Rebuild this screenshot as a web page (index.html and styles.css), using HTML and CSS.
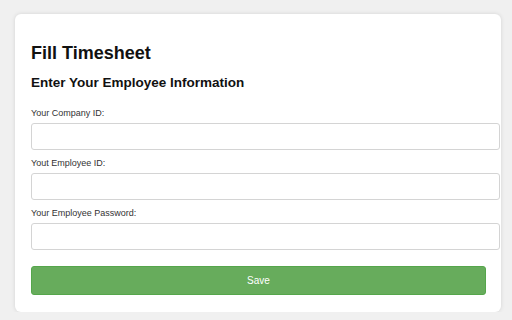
FILE: index.html
```html
<!DOCTYPE html>
<html>
<head>
<meta charset="utf-8">
<link rel="stylesheet" href="styles.css">
</head>
<body>
<div class="card">
  <h1 class="title">Fill Timesheet</h1>
  <h2 class="subtitle">Enter Your Employee Information</h2>
  <div class="field">
    <label class="label">Your Company ID:</label>
    <input class="input" type="text">
  </div>
  <div class="field">
    <label class="label">Yout Employee ID:</label>
    <input class="input" type="text">
  </div>
  <div class="field">
    <label class="label">Your Employee Password:</label>
    <input class="input" type="password">
  </div>
  <button class="save">Save</button>
</div>
</body>
</html>
```
FILE: styles.css
```css
html, body {
  margin: 0;
  padding: 0;
  background: #f0f0f0;
  font-family: "Liberation Sans", Arial, sans-serif;
}
body {
  padding: 14px 0 0 15px;
}
.card {
  box-sizing: border-box;
  width: 486px;
  height: 298px;
  background: #fff;
  border-radius: 6px;
  box-shadow: 0 0 4px rgba(0, 0, 0, 0.12);
  padding: 16px 15px 17px 16px;
}
.title {
  margin: 13px 0 0 0;
  font-size: 18px;
  line-height: 21px;
  font-weight: bold;
  color: #111;
}
.subtitle {
  margin: 11px 0 0 0;
  font-size: 13.5px;
  line-height: 16px;
  font-weight: bold;
  color: #111;
}
.field {
  display: flex;
  flex-direction: column;
  margin-top: 8px;
}
.subtitle + .field {
  margin-top: 17px;
}
.label {
  font-size: 9px;
  line-height: 11px;
  color: #333;
  margin-bottom: 4px;
}
.input {
  width: 100%;
  height: 27px;
  box-sizing: content-box;
  padding: 0 6px;
  height: 25px;
  border: 1px solid #d4d4d4;
  border-radius: 3px;
  margin: 0;
  background: #fff;
  font-family: inherit;
}
.save {
  display: block;
  width: 100%;
  height: 29px;
  margin-top: 16px;
  background: #67ac5c;
  border: 1px solid #55a64b;
  border-radius: 3px;
  color: #fff;
  font-family: "Liberation Sans", Arial, sans-serif;
  font-size: 10px;
  padding: 0;
}
```
